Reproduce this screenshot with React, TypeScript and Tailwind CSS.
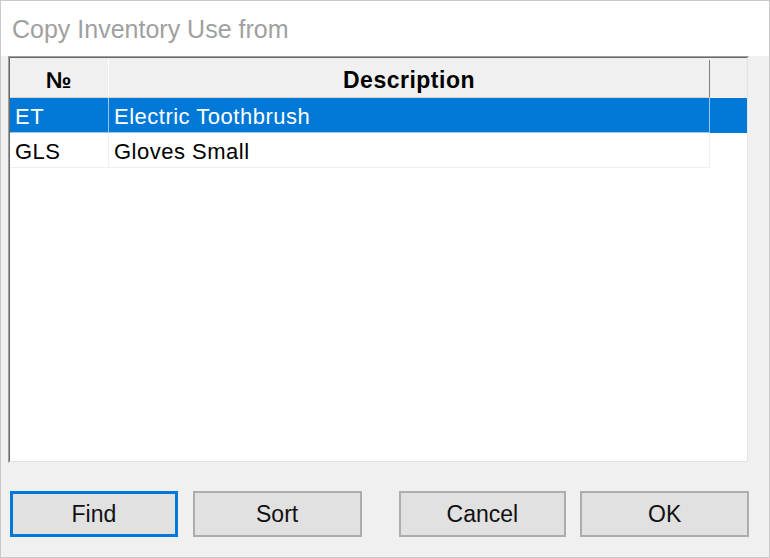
import React from 'react'

type Row = { code: string; description: string }

const rows: Row[] = [
  { code: 'ET', description: 'Electric Toothbrush' },
  { code: 'GLS', description: 'Gloves Small' },
]

function DialogButton({
  label,
  focused = false,
  className = '',
}: {
  label: string
  focused?: boolean
  className?: string
}) {
  return (
    <button
      type="button"
      className={
        'flex h-[46px] items-center justify-center bg-[#e1e1e1] text-[23px] text-[#111] ' +
        (focused ? 'border-[3px] border-[#0078d7] ' : 'border-2 border-[#adadad] ') +
        className
      }
    >
      {label}
    </button>
  )
}

export default function App() {
  const selected = 0

  return (
    <div className="flex h-[558px] w-[770px] flex-col border border-[#c9c9c9] bg-[#f0f0f0] font-['Liberation_Sans',Arial,sans-serif]">
      <div className="flex h-[55px] items-center bg-white pl-[11px] pt-[2px] text-[25px] text-[#a0a0a0]">
        Copy Inventory Use from
      </div>

      <div className="flex flex-1 flex-col pl-[7px] pr-[20px]">
        {/* grid with sunken border */}
        <div className="h-[407px] border border-[#a0a0a0] border-r-[#f0f0f0] border-b-[#f0f0f0]">
          <div className="flex h-full flex-col border border-[#696969] border-r-[#e3e3e3] border-b-[#e3e3e3] bg-white">
            <div className="flex h-[40px] shrink-0 border-t-[2px] border-[#f0f0f0] bg-[#f0f0f0] text-[23px] font-bold tracking-[0.5px] text-black">
              <div className="flex w-[99px] items-center justify-center border-r border-b border-r-white border-b-[#d5d5d5] pt-[3px]">
                №
              </div>
              <div className="flex w-[601px] items-center justify-center border-r border-b border-r-[#808080] border-b-[#d5d5d5] pt-[3px]">
                Description
              </div>
              <div className="flex-1" />
            </div>

            {rows.map((r, i) => {
              const sel = i === selected
              return (
                <div key={r.code} className="flex h-[35px] shrink-0 text-[22px] tracking-[0.5px]">
                  <div
                    className={
                      'flex w-[99px] items-center border-r border-b pl-[5px] pt-[2px] ' +
                      (sel
                        ? 'border-[#99c9ef] bg-[#0078d7] text-white'
                        : 'border-[#f0f0f0] bg-white text-black')
                    }
                  >
                    {r.code}
                  </div>
                  <div
                    className={
                      'flex w-[601px] items-center border-r border-b pl-[5px] pt-[2px] ' +
                      (sel
                        ? 'border-[#99c9ef] bg-[#0078d7] text-white'
                        : 'border-[#f0f0f0] bg-white text-black')
                    }
                  >
                    {r.description}
                  </div>
                  <div className={'flex-1 ' + (sel ? 'bg-[#0078d7]' : 'bg-white')} />
                </div>
              )
            })}
            <div className="flex-1" />
          </div>
        </div>

        <div className="mt-[28px] flex pl-[2px]">
          <DialogButton label="Find" focused className="w-[168px]" />
          <DialogButton label="Sort" className="ml-[15px] w-[169px]" />
          <DialogButton label="Cancel" className="ml-[37px] w-[168px]" />
          <DialogButton label="OK" className="ml-[14px] w-[169px]" />
        </div>
      </div>
    </div>
  )
}
